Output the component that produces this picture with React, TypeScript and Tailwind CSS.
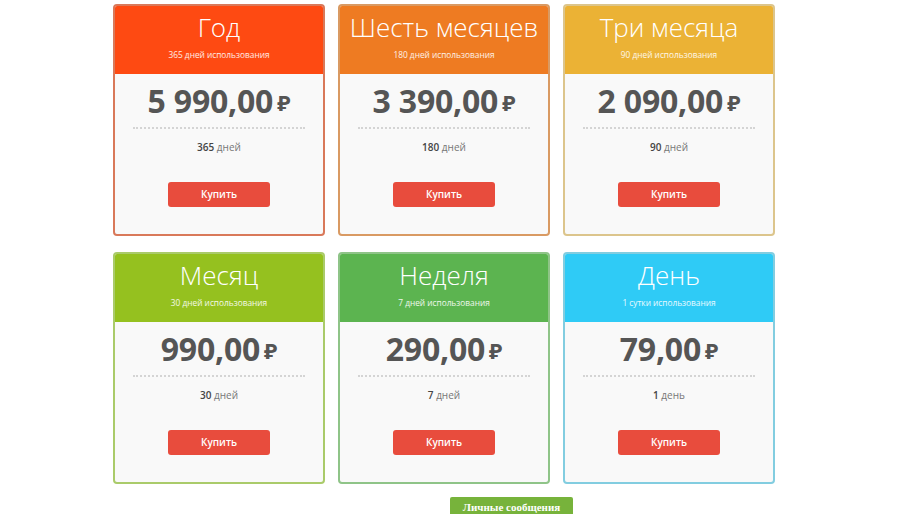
import React from "react";

type Plan = {
  title: string;
  sub: string;
  price: string;
  num: string;
  unit: string;
  header: string;
  border: string;
};

const plans: Plan[] = [
  { title: "Год", sub: "365 дней использования", price: "5 990,00", num: "365", unit: "дней", header: "bg-[#fe4a12]", border: "border-[#d9795a]" },
  { title: "Шесть месяцев", sub: "180 дней использования", price: "3 390,00", num: "180", unit: "дней", header: "bg-[#ee7b22]", border: "border-[#d99a63]" },
  { title: "Три месяца", sub: "90 дней использования", price: "2 090,00", num: "90", unit: "дней", header: "bg-[#ebb235]", border: "border-[#dcc58c]" },
  { title: "Месяц", sub: "30 дней использования", price: "990,00", num: "30", unit: "дней", header: "bg-[#95c11f]", border: "border-[#aacb6a]" },
  { title: "Неделя", sub: "7 дней использования", price: "290,00", num: "7", unit: "дней", header: "bg-[#5cb450]", border: "border-[#8fc488]" },
  { title: "День", sub: "1 сутки использования", price: "79,00", num: "1", unit: "день", header: "bg-[#2fcbf6]", border: "border-[#82cde0]" },
];

function Card({ p }: { p: Plan }) {
  return (
    <div className={`flex h-[232px] w-[212px] flex-col overflow-hidden rounded-[4px] border-2 bg-[#f9f9f9] ${p.border}`}>
      <div className={`flex h-[68px] flex-col items-center ${p.header}`}>
        <div className="mt-[5px] text-[26px] font-light leading-[32px] text-white">{p.title}</div>
        <div className="mt-[6px] text-[8.3px] leading-[11px] text-white/90">{p.sub}</div>
      </div>
      <div className="mx-[18px] flex flex-col items-center border-b-2 border-dotted border-[#d4d4d4] pb-[7px] pt-[8px]">
        <div className="flex items-center text-[#555]">
          <span className="text-[32px] font-bold leading-[38px] tracking-[-0.2px]">{p.price}</span>
          <span className="ml-[4px] mt-[2px] text-[22px] font-bold leading-[26px]">₽</span>
        </div>
      </div>
      <div className="mt-[11px] text-center text-[10px] leading-[14px] text-[#777]">
        <span className="font-semibold text-[#444]">{p.num}</span> {p.unit}
      </div>
      <div className="mt-[28px] flex justify-center">
        <button className="h-[25px] w-[102px] rounded-[3px] bg-[#e84c3d] text-[10px] font-semibold text-white">Купить</button>
      </div>
    </div>
  );
}

export default function App() {
  return (
    <div className="min-h-[514px] w-[900px] overflow-hidden bg-white" style={{ fontFamily: '"Open Sans", "Noto Sans", sans-serif' }}>
      <div className="ml-[113px] pt-[4px]">
        <div className="grid w-[662px] grid-cols-[212px_212px_212px] gap-x-[13px] gap-y-[16px]">
          {plans.map((p) => (
            <Card key={p.title} p={p} />
          ))}
        </div>
      </div>
      <div className="mt-[13px] flex pl-[450px]">
        <div
          className="flex h-[20px] w-[123px] items-start justify-center rounded-[2px] bg-[#77b33b] pt-[4px] text-[11px] font-bold leading-[13px] text-white"
          style={{ fontFamily: '"Liberation Serif", serif' }}
        >
          Личные сообщения
        </div>
      </div>
    </div>
  );
}
